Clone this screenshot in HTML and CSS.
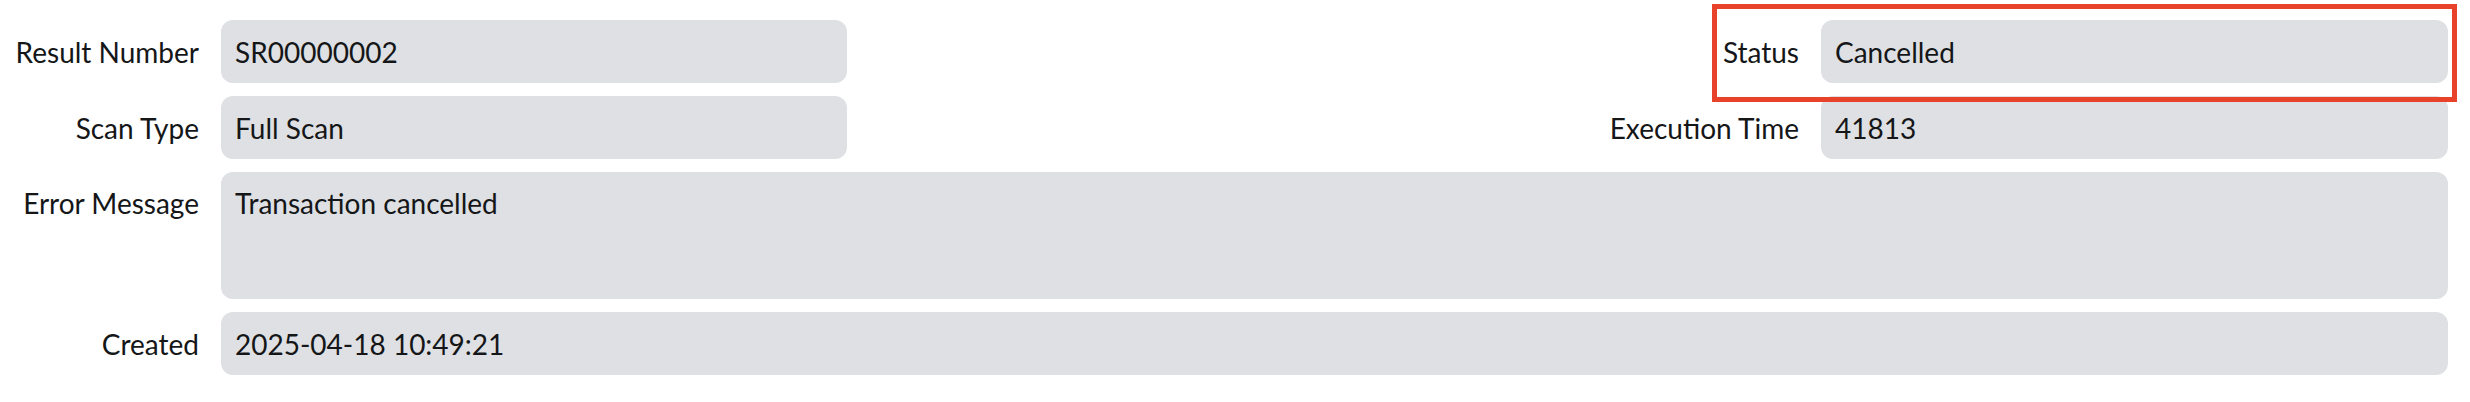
FILE: index.html
```html
<!DOCTYPE html>
<html lang="en">
<head>
<meta charset="utf-8">
<title>Scan Result</title>
<link rel="stylesheet" href="styles.css">
</head>
<body>
<div class="form">
  <div class="row-split">
    <div class="field field-left">
      <div class="label">Result Number</div>
      <div class="box">SR00000002</div>
    </div>
    <div class="field field-right">
      <div class="label">Status</div>
      <div class="box box-highlighted">Cancelled<span class="highlight"></span></div>
    </div>
  </div>
  <div class="row-split">
    <div class="field field-left">
      <div class="label">Scan Type</div>
      <div class="box">Full Scan</div>
    </div>
    <div class="field field-right">
      <div class="label">Execution Time</div>
      <div class="box">41813</div>
    </div>
  </div>
  <div class="field field-wide">
    <div class="label label-top">Error Message</div>
    <div class="box box-multi">Transaction cancelled</div>
  </div>
  <div class="field field-wide">
    <div class="label">Created</div>
    <div class="box">2025-04-18 10:49:21</div>
  </div>
</div>
</body>
</html>
```
FILE: styles.css
```css
html, body {
  margin: 0;
  padding: 0;
  background: #ffffff;
}

body {
  font-family: "Lato", "Noto Sans", sans-serif;
  font-size: 28px;
  color: #151618;
  -webkit-font-smoothing: antialiased;
}

.form {
  display: flex;
  flex-direction: column;
  gap: 13px;
  padding: 20px 22px 26px 0;
}

.row-split {
  display: flex;
  justify-content: space-between;
}

.field {
  display: flex;
  align-items: center;
  gap: 22px;
}

.label {
  line-height: 34px;
  text-align: right;
  white-space: nowrap;
}

.field-left .label,
.field-wide .label {
  width: 199px;
  flex: none;
}

.box {
  box-sizing: border-box;
  height: 63px;
  padding: 0 14px;
  display: flex;
  align-items: center;
  line-height: 34px;
  background: #dee0e3;
  border-radius: 12px;
  white-space: nowrap;
}

.field-left .box {
  width: 626px;
}

.field-right .box {
  width: 627px;
}

.field-wide .box {
  flex: 1;
}

.field-wide .label-top {
  align-self: flex-start;
  padding-top: 14px;
}

.box-multi {
  height: 127px;
  align-items: flex-start;
  padding-top: 14px;
}

.box-highlighted {
  position: relative;
}

.highlight {
  position: absolute;
  left: -109px;
  right: -9px;
  top: -16px;
  bottom: -19px;
  border: 5px solid #e8432a;
  pointer-events: none;
}
```
